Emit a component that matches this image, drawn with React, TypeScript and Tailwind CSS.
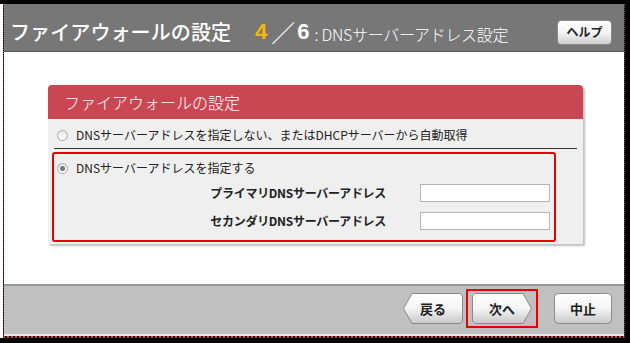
import React from 'react'

const jp = { fontFamily: '"Noto Sans CJK JP", "Liberation Sans", sans-serif' }

function ArrowButton({ label, dir, width }: { label: string; dir: 'left' | 'right' | 'none'; width: number }) {
  const h = 31
  const t = 9
  let pts = ''
  if (dir === 'left') pts = `${t},0.5 ${width - 3},0.5 ${width - 0.5},3 ${width - 0.5},${h - 3} ${width - 3},${h - 0.5} ${t},${h - 0.5} 0.5,${h / 2}`
  if (dir === 'right') pts = `3,0.5 ${width - t},0.5 ${width - 0.5},${h / 2} ${width - t},${h - 0.5} 3,${h - 0.5} 0.5,${h - 3} 0.5,3`
  const id = `g-${label}`
  return (
    <div className="relative" style={{ width, height: h }}>
      <svg width={width} height={h} className="absolute inset-0">
        <defs>
          <linearGradient id={id} x1="0" y1="0" x2="0" y2="1">
            <stop offset="0" stopColor="#ffffff" />
            <stop offset="0.5" stopColor="#f4f4f4" />
            <stop offset="1" stopColor="#c8c8c8" />
          </linearGradient>
        </defs>
        {dir === 'none' ? (
          <rect x="0.5" y="0.5" width={width - 1} height={h - 1} rx="4" fill={`url(#${id})`} stroke="#8a8a8a" />
        ) : (
          <polygon points={pts} fill={`url(#${id})`} stroke="#8a8a8a" />
        )}
      </svg>
      <span className="absolute inset-0 flex items-center justify-center text-[13px] font-bold text-[#222]" style={jp}>
        {label}
      </span>
    </div>
  )
}

function Radio({ checked }: { checked?: boolean }) {
  return (
    <span className="flex h-[11px] w-[11px] items-center justify-center rounded-full border border-[#a8a8a8] bg-gradient-to-b from-[#e6e6e6] to-[#ffffff]">
      {checked && <span className="h-[5px] w-[5px] rounded-full bg-[#777]" />}
    </span>
  )
}

export default function App() {
  return (
    <div className="flex h-[343px] w-[630px] flex-col bg-black pt-[4px] pr-[5px] pb-[5px]" style={jp}>
      <div className="flex flex-1 flex-col border-l-[3px] border-white">
        <div className="flex flex-1 flex-col border-x border-dotted border-[#8a3a48] border-b-2 border-b-[#d8404c]">
          {/* header */}
          <div className="flex h-[48px] items-center border-b border-[#555] bg-[#777777] pl-[6px] pr-[12px] pt-[9px]">
            <span className="text-[20px] font-medium leading-none tracking-[0.1px] text-white">ファイアウォールの設定</span>
            <span className="ml-[24px] text-[22px] font-bold leading-none text-[#f5b800]" style={{ fontFamily: '"Liberation Sans", sans-serif' }}>4</span>
            <span className="ml-[4px] text-[24px] font-light leading-none text-white">／</span>
            <span className="ml-[2px] text-[22px] font-bold leading-none text-white" style={{ fontFamily: '"Liberation Sans", sans-serif' }}>6</span>
            <span className="ml-[5px] mt-[3px] text-[16px] font-light leading-none tracking-[-0.3px] text-white">: DNSサーバーアドレス設定</span>
            <div className="ml-auto flex h-[25px] w-[55px] items-center justify-center rounded-[4px] border border-[#8a8a8a] bg-gradient-to-b from-white via-[#f5f5f5] to-[#cfcfcf] text-[12px] font-bold text-[#222]">
              ヘルプ
            </div>
          </div>

          {/* body */}
          <div className="flex h-[232px] flex-col bg-white pl-[44px] pt-[33px]">
            <div className="w-[535px] overflow-hidden rounded-t-[4px] bg-[#efefef] shadow-[2px_2px_2px_rgba(0,0,0,0.25)]">
              <div className="flex h-[34px] items-center bg-[#c94653] pl-[16px] text-[16px] font-light text-white">ファイアウォールの設定</div>
              <div className="flex h-[29px] items-center gap-[8px] pl-[9px] pt-[3px] text-[12px] text-[#222]">
                <Radio />
                <span>DNSサーバーアドレスを指定しない、またはDHCPサーバーから自動取得</span>
              </div>
              <div className="mx-[6px] h-px bg-[#333]" />
              <div className="ml-[4px] mt-[3px] mb-[2px] h-[90px] w-[504px] rounded-[3px] border-2 border-[#e80000] pl-[3px]">
                <div className="flex h-[28px] items-center gap-[8px] text-[12px] text-[#222]">
                  <Radio checked />
                  <span>DNSサーバーアドレスを指定する</span>
                </div>
                <div className="mt-[2px] grid grid-cols-[329px_130px] items-center gap-x-[34px] gap-y-[10px] text-[12px] font-bold tracking-[-0.3px] text-[#222]">
                  <span className="text-right">プライマリDNSサーバーアドレス</span>
                  <div className="h-[18px] border border-[#b4b4b4] bg-white" />
                  <span className="text-right">セカンダリDNSサーバーアドレス</span>
                  <div className="h-[18px] border border-[#b4b4b4] bg-white" />
                </div>
              </div>
            </div>
          </div>

          {/* footer */}
          <div className="flex flex-1 items-center justify-end border-t-2 border-[#999] bg-[#c0c0c0] pr-[12px] pb-[3px]">
            <ArrowButton label="戻る" dir="left" width={60} />
            <div className="ml-[3px] flex h-[39px] w-[72px] items-center justify-center border-2 border-[#e80000]">
              <ArrowButton label="次へ" dir="right" width={60} />
            </div>
            <div className="ml-[16px]">
              <ArrowButton label="中止" dir="none" width={58} />
            </div>
          </div>
          <div className="h-[2px] bg-[#e8e8e8]" />
        </div>
      </div>
    </div>
  )
}
